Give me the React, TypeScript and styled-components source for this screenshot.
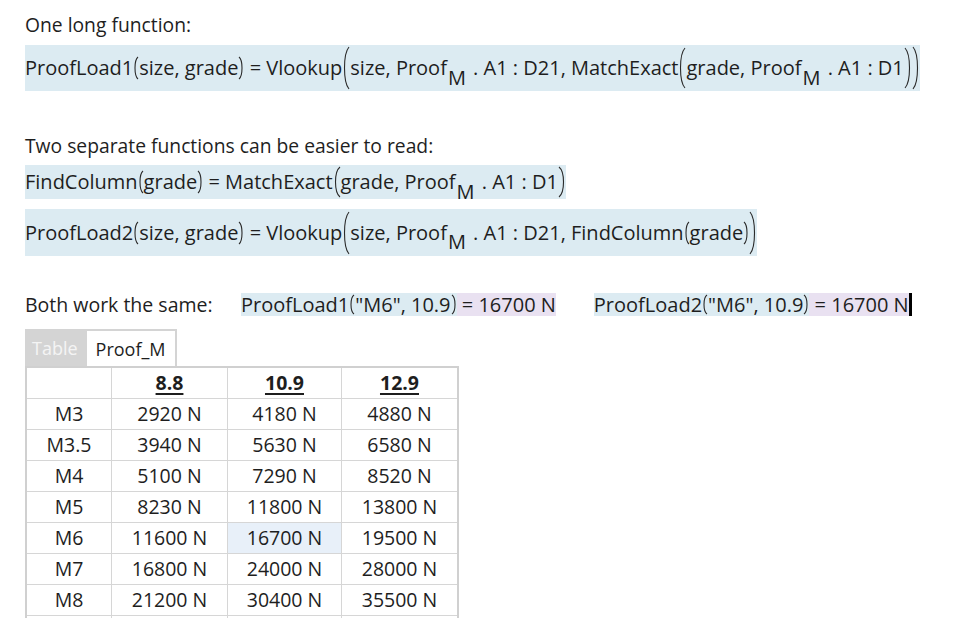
import React from "react";
import styled, { createGlobalStyle } from "styled-components";

const GlobalStyle = createGlobalStyle`
  html, body {
    margin: 0;
    padding: 0;
    background: #ffffff;
  }
  body {
    font-family: "Open Sans", "Noto Sans", sans-serif;
    color: #1e1e1e;
  }
`;

const Page = styled.div`
  width: 955px;
  height: 618px;
  overflow: hidden;
  padding: 13px 0 0 25px;
  box-sizing: border-box;
  display: flex;
  flex-direction: column;
  align-items: flex-start;

  & > * {
    flex: none;
  }
`;

const Label = styled.div<{ $top?: number }>`
  font-size: 19.3px;
  line-height: 24px;
  margin-top: ${(p) => p.$top ?? 0}px;
`;

const Region = styled.div<{ $h: number; $top: number }>`
  display: flex;
  align-items: center;
  height: ${(p) => p.$h}px;
  margin-top: ${(p) => p.$top}px;
  background: #dcebf2;
  font-size: 20px;
  white-space: pre;
`;

const T = styled.span`
  line-height: 24px;
`;

const Sub = styled.span`
  display: inline-block;
  transform: translateY(9px);
  margin: 0 2px 0 1px;
`;

const ParenSvg = styled.svg`
  flex: none;
  display: block;
`;

function Paren({ h, right, w = 8 }: { h: number; right?: boolean; w?: number }) {
  const d = right
    ? `M1 1 C${w - 1} ${h * 0.18} ${w - 1} ${h * 0.82} 1 ${h - 1}`
    : `M${w - 1} 1 C1 ${h * 0.18} 1 ${h * 0.82} ${w - 1} ${h - 1}`;
  return (
    <ParenSvg width={w} height={h} viewBox={`0 0 ${w} ${h}`}>
      <path d={d} fill="none" stroke="#2a2a2a" strokeWidth="1.1" />
    </ParenSvg>
  );
}

const Proof = () => (
  <>
    <T>Proof</T>
    <Sub>M</Sub>
  </>
);

const ResultRow = styled.div`
  display: flex;
  align-items: center;
  margin-top: 35px;
  font-size: 20px;
`;

const ResultLabel = styled.div`
  width: 216px;
  flex: none;
  font-size: 19.5px;
`;

const ResultBox = styled.div<{ $gap?: number }>`
  display: flex;
  height: 23px;
  margin-right: ${(p) => p.$gap ?? 0}px;
  white-space: pre;
`;

const Part = styled.div<{ $bg: string }>`
  display: flex;
  align-items: center;
  background: ${(p) => p.$bg};
`;

const Cursor = styled.div`
  width: 3px;
  height: 23px;
  background: #000;
`;

const Tabs = styled.div`
  display: flex;
  margin-top: 11px;
  height: 37px;
`;

const Tab = styled.div<{ $active?: boolean }>`
  display: flex;
  align-items: center;
  padding: 0 9px 0 ${(p) => (p.$active ? 9 : 7)}px;
  font-size: 18px;
  background: ${(p) => (p.$active ? "#ffffff" : "#d4d4d4")};
  color: ${(p) => (p.$active ? "#1e1e1e" : "#f4f4f4")};
  border: ${(p) => (p.$active ? "2px solid #d4d4d4" : "none")};
  border-bottom: none;
  border-left: none;
`;

const Grid = styled.table`
  border-collapse: collapse;
  border-left: 2px solid #d0d0d0;
  border-right: 2px solid #d0d0d0;
  border-top: 2px solid #d0d0d0;
  font-family: "Open Sans", "Lato", sans-serif;
  font-size: 19.5px;
  line-height: 26px;
  color: #1e1e1e;
`;

const Cell = styled.td<{ $w?: number; $hl?: boolean; $head?: boolean }>`
  width: ${(p) => p.$w ?? 0}px;
  height: 30px;
  padding: 0;
  text-align: center;
  white-space: nowrap;
  border: 1px solid #d6d6d6;
  background: ${(p) => (p.$hl ? "#e8f0f9" : "#ffffff")};
  font-weight: ${(p) => (p.$head ? 700 : 400)};
  text-decoration: ${(p) => (p.$head ? "underline" : "none")};
  text-underline-offset: 3px;
  text-decoration-thickness: 2px;
`;

const rows: [string, string, string, string][] = [
  ["M3", "2920 N", "4180 N", "4880 N"],
  ["M3.5", "3940 N", "5630 N", "6580 N"],
  ["M4", "5100 N", "7290 N", "8520 N"],
  ["M5", "8230 N", "11800 N", "13800 N"],
  ["M6", "11600 N", "16700 N", "19500 N"],
  ["M7", "16800 N", "24000 N", "28000 N"],
  ["M8", "21200 N", "30400 N", "35500 N"],
  ["", "", "", ""],
];

export default function App() {
  return (
    <>
      <GlobalStyle />
      <Page>
        <Label>One long function:</Label>
        <Region $h={46} $top={8}>
          <T>ProofLoad1</T>
          <Paren h={24} w={6} />
          <T>size, grade</T>
          <Paren h={24} w={6} right />
          <T> = Vlookup</T>
          <Paren h={44} />
          <T>size, </T>
          <Proof />
          <T> . A1 : D21, MatchExact</T>
          <Paren h={42} />
          <T>grade, </T>
          <Proof />
          <T> . A1 : D1</T>
          <Paren h={42} right />
          <Paren h={44} right />
        </Region>

        <Label $top={43}>Two separate functions can be easier to read:</Label>
        <Region $h={34} $top={7}>
          <T>FindColumn</T>
          <Paren h={24} w={6} />
          <T>grade</T>
          <Paren h={24} w={6} right />
          <T> = MatchExact</T>
          <Paren h={32} />
          <T>grade, </T>
          <Proof />
          <T> . A1 : D1</T>
          <Paren h={32} right />
        </Region>
        <Region $h={47} $top={10}>
          <T>ProofLoad2</T>
          <Paren h={24} w={6} />
          <T>size, grade</T>
          <Paren h={24} w={6} right />
          <T> = Vlookup</T>
          <Paren h={44} />
          <T>size, </T>
          <Proof />
          <T> . A1 : D21, FindColumn</T>
          <Paren h={24} w={6} />
          <T>grade</T>
          <Paren h={24} w={6} right />
          <Paren h={44} right />
        </Region>

        <ResultRow>
          <ResultLabel>Both work the same:</ResultLabel>
          <ResultBox $gap={38}>
            <Part $bg="#dcebf2">
              <T>ProofLoad1</T>
              <Paren h={21} w={6} />
              <T>"M6", 10.9</T>
              <Paren h={21} w={6} right />
            </Part>
            <Part $bg="#e9e1f1">
              <T> = 16700 N</T>
            </Part>
          </ResultBox>
          <ResultBox>
            <Part $bg="#dcebf2">
              <T>ProofLoad2</T>
              <Paren h={21} w={6} />
              <T>"M6", 10.9</T>
              <Paren h={21} w={6} right />
            </Part>
            <Part $bg="#e9e1f1">
              <T> = 16700 N</T>
            </Part>
            <Cursor />
          </ResultBox>
        </ResultRow>

        <Tabs>
          <Tab>Table</Tab>
          <Tab $active>Proof_M</Tab>
        </Tabs>
        <Grid>
          <tbody>
            <tr>
              <Cell $w={84} $head />
              <Cell $w={115} $head>8.8</Cell>
              <Cell $w={113} $head>10.9</Cell>
              <Cell $w={115} $head>12.9</Cell>
            </tr>
            {rows.map((r, ri) => (
              <tr key={ri}>
                {r.map((v, i) => (
                  <Cell key={i} $hl={r[0] === "M6" && i === 2}>
                    {v}
                  </Cell>
                ))}
              </tr>
            ))}
          </tbody>
        </Grid>
      </Page>
    </>
  );
}
